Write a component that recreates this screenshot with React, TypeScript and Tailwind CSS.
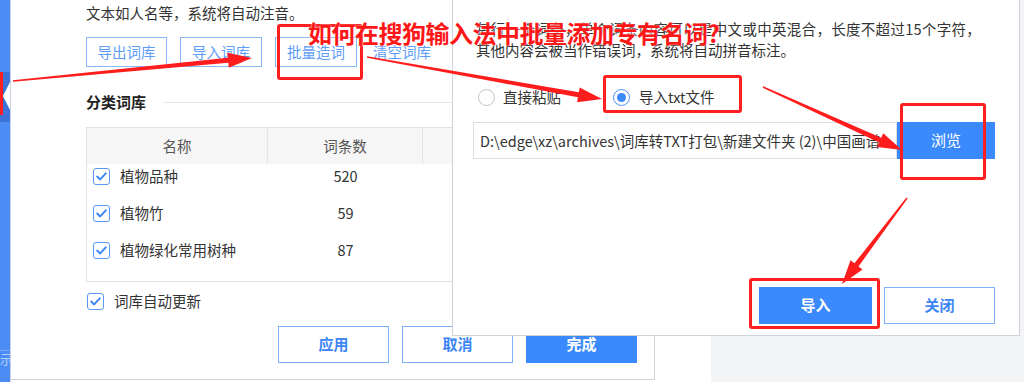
import React from 'react';

const font = "font-['Noto_Sans_CJK_SC','Noto_Sans',sans-serif]";

type Pt = [number, number];

// tapered annotation arrow, thin at the tail and thick near the head
function arrowPoints(tail: Pt, tip: Pt, w0 = 1.5, w1 = 5, hl = 24, hw = 15) {
  const [x1, y1] = tail;
  const [x2, y2] = tip;
  const dx = x2 - x1;
  const dy = y2 - y1;
  const len = Math.hypot(dx, dy);
  const ux = dx / len;
  const uy = dy / len;
  const nx = -uy;
  const ny = ux;
  const bx = x2 - ux * hl;
  const by = y2 - uy * hl;
  const pts: Pt[] = [
    [x1 + (nx * w0) / 2, y1 + (ny * w0) / 2],
    [bx + (nx * w1) / 2, by + (ny * w1) / 2],
    [bx + (nx * hw) / 2, by + (ny * hw) / 2],
    [x2, y2],
    [bx - (nx * hw) / 2, by - (ny * hw) / 2],
    [bx - (nx * w1) / 2, by - (ny * w1) / 2],
    [x1 - (nx * w0) / 2, y1 - (ny * w0) / 2],
  ];
  return pts.map((p) => `${p[0].toFixed(1)},${p[1].toFixed(1)}`).join(' ');
}

const arrows: [Pt, Pt][] = [
  [[13, 81], [252, 58]],
  [[367, 57], [602, 99]],
  [[763, 87], [902, 150]],
  [[907, 198], [842, 284]],
];

function Check() {
  return (
    <span className="flex h-[17px] w-[17px] shrink-0 items-center justify-center rounded-[3px] border border-[#5b97f5] bg-white">
      <svg width="11" height="9" viewBox="0 0 11 9" fill="none">
        <path d="M1.2 4.6 L4.2 7.4 L9.8 1.4" stroke="#3d86f5" strokeWidth="2" strokeLinecap="round" strokeLinejoin="round" />
      </svg>
    </span>
  );
}

function Radio({ on }: { on?: boolean }) {
  return (
    <span
      className={
        'flex h-[17px] w-[17px] shrink-0 items-center justify-center rounded-full border bg-white ' +
        (on ? 'border-[#4a8ef7]' : 'border-[#c2c2c2]')
      }
    >
      {on && <span className="h-[9px] w-[9px] rounded-full bg-[#3a8afd]" />}
    </span>
  );
}

const rows = [
  { name: '植物品种', count: 520 },
  { name: '植物竹', count: 59 },
  { name: '植物绿化常用树种', count: 87 },
];

export default function App() {
  return (
    <div className={`relative flex h-[382px] w-[1024px] overflow-hidden bg-white text-[14.5px] text-[#333] ${font}`}>
      {/* sidebar strip */}
      <div className="relative flex h-full w-[11px] shrink-0 flex-col border-r border-[#c9d2de] bg-[#4b8cf5]">
        <div className="h-[72px]" />
        <div className="relative h-[50px] bg-[#3b73d8]">
          <div className="absolute left-0 top-0 h-[43px] w-[3px] bg-[#ff2020]" />
          <svg className="absolute left-[3px] top-[10px]" width="7" height="28" viewBox="0 0 7 28">
            <path d="M7 0 L0 14 L7 28 Z" fill="#ffffff" />
          </svg>
        </div>
        <div className="flex-1" />
        <div className="h-[32px] overflow-hidden border-t border-[#7aa8f6] text-[13px] leading-[16px] text-[#b9d2fb]">示</div>
      </div>

      {/* settings dialog */}
      <div className="flex h-[380px] w-[644px] shrink-0 flex-col border-b border-r border-[#d0d4da] pl-[75px] pt-[3px]">
        <p className="leading-[20px]">文本如人名等，系统将自动注音。</p>
        <div className="mt-[14px] flex items-center gap-[13px] text-[#5d9cf8]">
          <button className="h-[30px] w-[81px] border border-[#8ab7fa]">导出词库</button>
          <button className="h-[30px] w-[82px] border border-[#8ab7fa]">导入词库</button>
          <button className="h-[30px] w-[82px] border border-[#8ab7fa]">批量造词</button>
          <button className="h-[30px] px-[3px]">清空词库</button>
        </div>
        <div className="mt-[24px] flex items-center gap-[13px]">
          <span className="text-[15px] font-bold leading-[22px] text-[#222]">分类词库</span>
          <span className="ml-[4px] h-px flex-1 bg-[#e6e6e6]" />
        </div>
        <div className="mt-[14px] h-[155px] w-[551px] border border-[#e1e1e1]">
          <div className="flex h-[36px] bg-[#f6f6f6] text-[#555]">
            <div className="flex w-[181px] items-center justify-center border-r border-[#e4e4e4]">名称</div>
            <div className="flex w-[155px] items-center justify-center border-r border-[#e4e4e4]">词条数</div>
            <div className="flex-1" />
          </div>
          <div className="flex flex-col gap-[13px]">
            {rows.map((r) => (
              <div key={r.name} className="flex h-[24px] items-center">
                <div className="flex w-[181px] items-center gap-[10px] pl-[6px]">
                  <Check />
                  <span>{r.name}</span>
                </div>
                <div className="w-[155px] text-center">{r.count}</div>
              </div>
            ))}
          </div>
        </div>
        <div className="mt-[9px] flex h-[20px] items-center gap-[10px] pl-[1px]">
          <Check />
          <span>词库自动更新</span>
        </div>
        <div className="mt-[15px] flex gap-[13px] pl-[192px] text-[15px] font-bold">
          <button className="h-[37px] w-[111px] border border-[#7fb0fb] text-[#3d86f5]">应用</button>
          <button className="h-[37px] w-[111px] border border-[#7fb0fb] text-[#3d86f5]">取消</button>
          <button className="h-[37px] w-[111px] bg-[#3a8afd] text-white">完成</button>
        </div>
      </div>

      <div className="w-[56px] shrink-0" />
      <div className="flex-1 bg-[#f3f4f6]" />

      {/* batch add dialog */}
      <div className="absolute left-[452px] top-0 flex h-[336px] w-[568px] flex-col border-b border-l border-r border-[#cfd3d9] bg-white pl-[20px] pr-[24px] pt-[18px]">
        <p className="pl-[3px] leading-[21px] tracking-[0.3px]">每行一个词条，单个词条内容可以是中文或中英混合，长度不超过15个字符，</p>
        <p className="pl-[3px] leading-[21px]">其他内容会被当作错误词，系统将自动拼音标注。</p>
        <div className="mt-[27px] flex h-[20px] items-center pl-[5px]">
          <Radio />
          <span className="ml-[8px]">直接粘贴</span>
          <span className="ml-[52px]">
            <Radio on />
          </span>
          <span className="ml-[9px]">导入txt文件</span>
        </div>
        <div className="mt-[15px] flex h-[37px]">
          <div className="flex w-[425px] items-center overflow-hidden whitespace-nowrap border border-[#dedede] pl-[6px]">
            {'D:\\edge\\xz\\archives\\词库转TXT打包\\新建文件夹 (2)\\中国画谱'}
          </div>
          <button className="w-[98px] bg-[#3a8afd] text-[15px] text-white">浏览</button>
        </div>
        <div className="mt-auto mb-[11px] flex justify-end gap-[12px] text-[15px] font-bold">
          <button className="h-[37px] w-[113px] bg-[#3a8afd] text-white">导入</button>
          <button className="h-[37px] w-[111px] border border-[#7fb0fb] text-[#3d86f5]">关闭</button>
        </div>
      </div>

      {/* annotations */}
      <div className="absolute left-[277px] top-[24px] h-[56px] w-[86px] rounded-[3px] border-[3px] border-[#ff1f1f]" />
      <div className="absolute left-[603px] top-[75px] h-[38px] w-[139px] rounded-[3px] border-[3px] border-[#ff1f1f]" />
      <div className="absolute left-[900px] top-[103px] h-[77px] w-[86px] rounded-[3px] border-[3px] border-[#ff1f1f]" />
      <div className="absolute left-[749px] top-[278px] h-[51px] w-[131px] rounded-[3px] border-[3px] border-[#ff1f1f]" />

      <svg className="pointer-events-none absolute left-0 top-0" width="1024" height="382" viewBox="0 0 1024 382">
        {arrows.map(([a, b], i) => (
          <polygon key={i} points={arrowPoints(a, b)} fill="#ff1c1c" />
        ))}
      </svg>

      <div className="absolute left-[308px] top-[18px] whitespace-nowrap text-[24px] font-bold leading-[30px] tracking-[-0.5px] text-[#ff1616] [text-shadow:0_0_2px_#fff]">
        如何在搜狗输入法中批量添加专有名词?
      </div>
    </div>
  );
}
